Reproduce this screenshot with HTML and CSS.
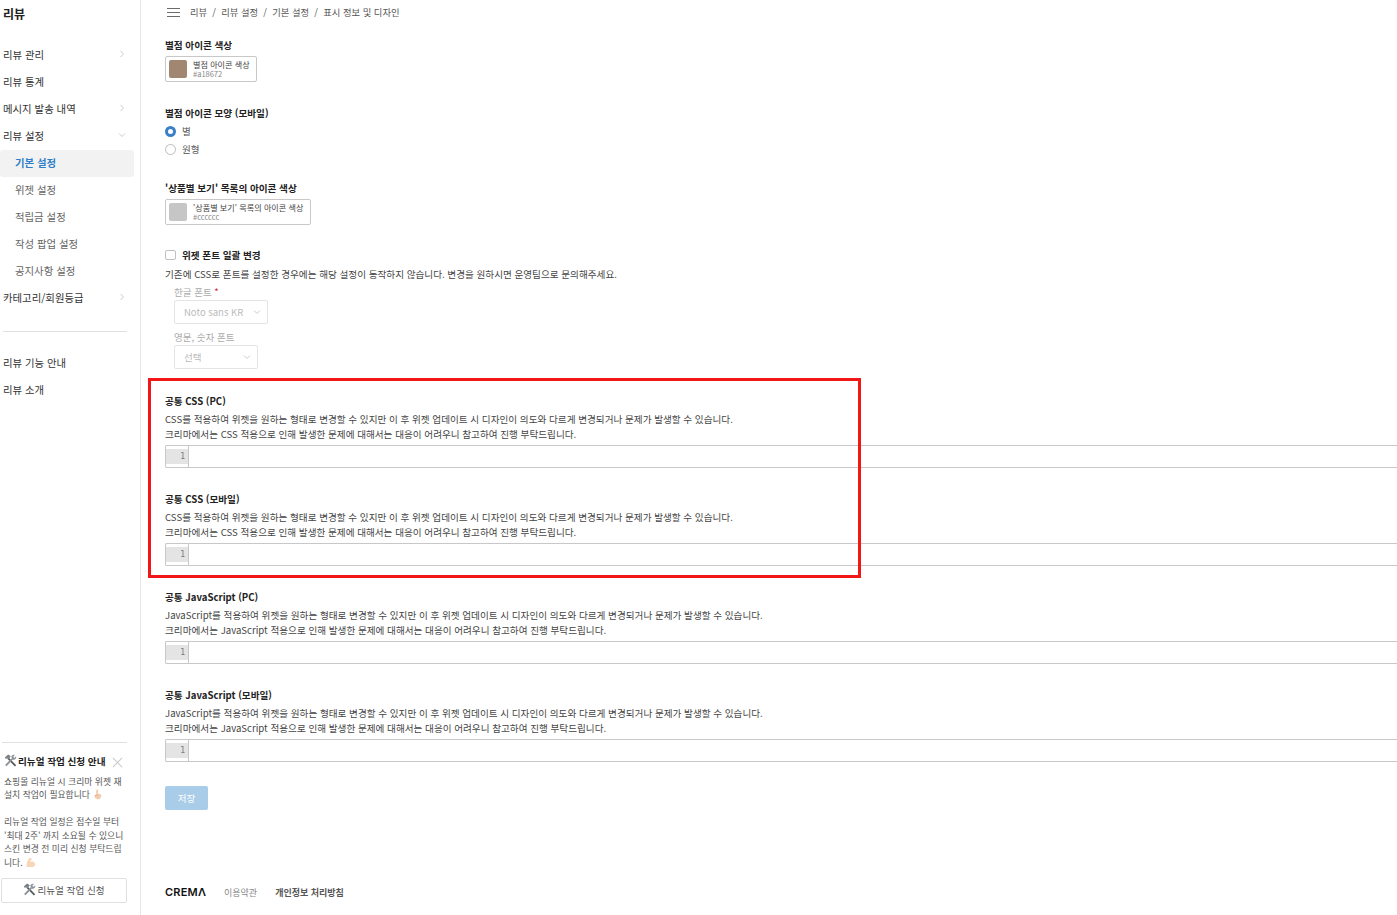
FILE: index.html
```html
<!DOCTYPE html>
<html lang="ko">
<head>
<meta charset="utf-8">
<title>표시 정보 및 디자인</title>
<link rel="stylesheet" href="styles.css">
</head>
<body>
<svg class="defs" width="0" height="0" aria-hidden="true">
  <symbol id="tools" viewBox="0 0 16 16">
    <path d="M5.2 5.4 L14.2 14.6" stroke="#55595d" stroke-width="2.2" fill="none"/>
    <path d="M1 4.4 L4.6 .9 L6 .9 L8.4 3.2 L5.2 6.6 L3.6 5.2 L2.4 6 Z" fill="#7c8287"/>
    <path d="M10.2 6 L2.2 14.4" stroke="#8d9398" stroke-width="2.4" fill="none"/>
    <path d="M9 3.4 C9.4 1.4 11.6 .4 13.4 1.2 L11.4 3.4 L12.8 4.8 L14.9 2.8 C15.5 4.8 14.4 6.8 12.4 7.2 L10.6 7.2 Z" fill="#8d9398"/>
  </symbol>
  <symbol id="chev-r" viewBox="0 0 8 8"><path d="M2.5 1 L5.5 4 L2.5 7" fill="none" stroke="#c4c4c4" stroke-width="0.9"/></symbol>
  <symbol id="chev-d" viewBox="0 0 8 8"><path d="M1 2.5 L4 5.5 L7 2.5" fill="none" stroke="#c4c4c4" stroke-width="0.9"/></symbol>
</svg>

<div class="page">
  <aside class="sidebar">
    <h1 class="brand">리뷰</h1>
    <nav class="nav nav-main">
      <a class="nav-item">리뷰 관리<svg class="chev"><use href="#chev-r"/></svg></a>
      <a class="nav-item">리뷰 통계</a>
      <a class="nav-item">메시지 발송 내역<svg class="chev"><use href="#chev-r"/></svg></a>
      <a class="nav-item">리뷰 설정<svg class="chev"><use href="#chev-d"/></svg></a>
      <a class="nav-sub active">기본 설정</a>
      <a class="nav-sub">위젯 설정</a>
      <a class="nav-sub">적립금 설정</a>
      <a class="nav-sub">작성 팝업 설정</a>
      <a class="nav-sub">공지사항 설정</a>
      <a class="nav-item">카테고리/회원등급<svg class="chev"><use href="#chev-r"/></svg></a>
    </nav>
    <hr class="side-rule first">
    <nav class="nav">
      <a class="nav-item">리뷰 기능 안내</a>
      <a class="nav-item">리뷰 소개</a>
    </nav>
    <div class="notice">
      <hr class="side-rule">
      <div class="notice-head">
        <svg class="tool-ico"><use href="#tools"/></svg>
        <strong>리뉴얼 작업 신청 안내</strong>
        <svg class="close" viewBox="0 0 12 12"><path d="M1 1 L11 11 M11 1 L1 11" stroke="#c9c9c9" stroke-width="1.1"/></svg>
      </div>
      <p class="notice-text">쇼핑몰 리뉴얼 시 크리마 위젯 재설치 작업이 필요합니다
        <svg class="emoji" viewBox="0 0 12 12"><path d="M5 .6 C5.8 .2 6.6 .6 6.6 1.6 L6.6 5 L9 5.4 C10 5.8 10.4 7 10 8.4 C9.5 10.4 8 11.4 6 11.2 C4 11 2.8 9.6 2.6 8 C2.5 7 3.4 6.2 4.6 5.8 L4.6 1.6 Z" fill="#f3cdb0"/><path d="M3.4 7.5 C4.5 6.8 6 7 7 7.6" stroke="#d99a72" stroke-width=".6" fill="none"/></svg></p>
      <p class="notice-text gap">리뉴얼 작업 일정은 접수일 부터 '최대 2주' 까지 소요될 수 있으니 스킨 변경 전 미리 신청 부탁드립니다.
        <svg class="emoji" viewBox="0 0 12 12"><path d="M5 1.2 C6.6 .6 7.6 1.4 7.4 2.6 L6.2 3.2 L6 5.4 C7.6 4.4 10 5 10.8 6.8 C11.4 8.6 10.6 10.6 8.4 11 L2 11 C1.2 9 2.4 4.2 5 1.2 Z" fill="#f7d6b5"/></svg></p>
      <button class="notice-btn" type="button"><svg class="tool-ico"><use href="#tools"/></svg>리뉴얼 작업 신청</button>
    </div>
  </aside>

  <main class="main">
    <header class="crumbs">
      <svg class="burger" viewBox="0 0 13 9"><path d="M0 .5 H13 M0 4.5 H13 M0 8.5 H13" stroke="#6b6b6b" stroke-width="1"/></svg>
      <span class="crumb-text">리뷰&nbsp; /&nbsp; 리뷰 설정&nbsp; /&nbsp; 기본 설정&nbsp; /&nbsp; 표시 정보 및 디자인</span>
    </header>

    <section class="field f-color1">
      <h2 class="label">별점 아이콘 색상</h2>
      <div class="swatch-box">
        <span class="swatch brown"></span>
        <span class="swatch-text"><b>별점 아이콘 색상</b><i>#a18672</i></span>
      </div>
    </section>

    <section class="field f-shape">
      <h2 class="label">별점 아이콘 모양 (모바일)</h2>
      <label class="radio-row"><span class="radio on"></span>별</label>
      <label class="radio-row"><span class="radio"></span>원형</label>
    </section>

    <section class="field f-color2">
      <h2 class="label">'상품별 보기' 목록의 아이콘 색상</h2>
      <div class="swatch-box">
        <span class="swatch grey"></span>
        <span class="swatch-text"><b>'상품별 보기' 목록의 아이콘 색상</b><i>#cccccc</i></span>
      </div>
    </section>

    <section class="field f-font">
      <div class="check-row"><span class="check"></span><h2 class="label">위젯 폰트 일괄 변경</h2></div>
      <p class="desc">기존에 CSS로 폰트를 설정한 경우에는 해당 설정이 동작하지 않습니다. 변경을 원하시면 운영팀으로 문의해주세요.</p>
      <div class="font-opts">
        <div class="opt-label">한글 폰트 <em>*</em></div>
        <div class="select s-wide"><span>Noto sans KR</span><svg class="chev"><use href="#chev-d"/></svg></div>
        <div class="opt-label second">영문, 숫자 폰트</div>
        <div class="select s-narrow"><span>선택</span><svg class="chev"><use href="#chev-d"/></svg></div>
      </div>
    </section>

    <section class="code-field">
      <h2 class="label">공통 CSS (PC)</h2>
      <p class="desc">CSS를 적용하여 위젯을 원하는 형태로 변경할 수 있지만 이 후 위젯 업데이트 시 디자인이 의도와 다르게 변경되거나 문제가 발생할 수 있습니다.</p>
      <p class="desc">크리마에서는 CSS 적용으로 인해 발생한 문제에 대해서는 대응이 어려우니 참고하여 진행 부탁드립니다.</p>
      <div class="editor"><div class="gutter-col"><span class="gutter">1</span></div></div>
    </section>
    <section class="code-field">
      <h2 class="label">공통 CSS (모바일)</h2>
      <p class="desc">CSS를 적용하여 위젯을 원하는 형태로 변경할 수 있지만 이 후 위젯 업데이트 시 디자인이 의도와 다르게 변경되거나 문제가 발생할 수 있습니다.</p>
      <p class="desc">크리마에서는 CSS 적용으로 인해 발생한 문제에 대해서는 대응이 어려우니 참고하여 진행 부탁드립니다.</p>
      <div class="editor"><div class="gutter-col"><span class="gutter">1</span></div></div>
    </section>
    <section class="code-field">
      <h2 class="label">공통 JavaScript (PC)</h2>
      <p class="desc">JavaScript를 적용하여 위젯을 원하는 형태로 변경할 수 있지만 이 후 위젯 업데이트 시 디자인이 의도와 다르게 변경되거나 문제가 발생할 수 있습니다.</p>
      <p class="desc">크리마에서는 JavaScript 적용으로 인해 발생한 문제에 대해서는 대응이 어려우니 참고하여 진행 부탁드립니다.</p>
      <div class="editor"><div class="gutter-col"><span class="gutter">1</span></div></div>
    </section>
    <section class="code-field">
      <h2 class="label">공통 JavaScript (모바일)</h2>
      <p class="desc">JavaScript를 적용하여 위젯을 원하는 형태로 변경할 수 있지만 이 후 위젯 업데이트 시 디자인이 의도와 다르게 변경되거나 문제가 발생할 수 있습니다.</p>
      <p class="desc">크리마에서는 JavaScript 적용으로 인해 발생한 문제에 대해서는 대응이 어려우니 참고하여 진행 부탁드립니다.</p>
      <div class="editor"><div class="gutter-col"><span class="gutter">1</span></div></div>
    </section>

    <button class="save" type="button">저장</button>

    <footer class="footer">
      <span class="logo">CREM<span class="logo-a">Λ</span></span>
      <a class="foot-link">이용약관</a>
      <a class="foot-link strong">개인정보 처리방침</a>
    </footer>
  </main>
</div>
<div class="highlight"></div>
</body>
</html>
```
FILE: styles.css
```css
* { box-sizing: border-box; }
html, body { margin: 0; padding: 0; height: 915px; overflow: hidden; background: #fff; }
body {
  font-family: "Noto Sans CJK KR", "Noto Sans", sans-serif;
  font-size: 9.6px;
  color: #333;
  position: relative;
}
.defs { position: absolute; }
.page { display: flex; height: 915px; }

/* sidebar */
.sidebar {
  width: 141px;
  flex: none;
  border-right: 1px solid #e8e8e8;
  display: flex;
  flex-direction: column;
  height: 915px;
}
.brand { margin: 0; padding: 5px 0 0 3px; height: 41.5px; font-size: 12px; line-height: 18px; font-weight: 700; color: #222; }
.nav { display: flex; flex-direction: column; }
.nav-item, .nav-sub {
  height: 27px;
  display: flex;
  align-items: center;
  justify-content: space-between;
  font-size: 10.4px;
  color: #333;
  padding: 0 14px 0 3px;
}
.nav-main .nav-item, .nav-main .nav-sub { padding-bottom: 1.5px; }
.nav-sub { padding-left: 15px; margin-right: 6px; color: #666; }
.nav-sub.active { background: #f2f2f3; color: #2f7fc8; font-weight: 700; border-radius: 3px; }
.chev { width: 8px; height: 8px; flex: none; }
.side-rule { border: 0; border-top: 1px solid #e0e0e0; margin: 0 13px 0 3px; }
.side-rule.first { margin-top: 19.5px; margin-bottom: 17px; }
.notice { margin-top: auto; padding: 0 0 12px 0; }
.notice > .side-rule { margin: 0 13px 0 2px; }
.notice-head { display: flex; align-items: center; height: 22px; margin-top: 7px; padding-left: 4px; font-size: 9.6px; color: #222; }
.notice-head strong { font-weight: 700; white-space: nowrap; margin-left: 1px; }
.tool-ico { width: 13px; height: 13px; flex: none; }
.close { width: 11px; height: 11px; margin-left: 6px; margin-top: 3px; flex: none; }
.notice-text { margin: 3px 12px 0 4px; font-size: 8.8px; line-height: 13.5px; color: #555; }
.notice-text.gap { margin-top: 13.5px; }
.emoji { width: 11px; height: 11px; vertical-align: -2px; }
.notice-btn {
  display: flex; align-items: center; justify-content: center; gap: 1px;
  width: 126px; height: 25px; margin: 9px 0 0 1px;
  background: #fff; border: 1px solid #e0e0e0; border-radius: 2px;
  font: inherit; font-size: 9.6px; color: #555; padding: 0 0 2px;
}

/* main */
.main { flex: 1; min-width: 0; padding-left: 24px; }
.crumbs { display: flex; align-items: center; height: 24px; }
.burger { width: 13px; height: 9px; margin: 0 10px 0 2px; flex: none; }
.crumb-text { font-size: 9.32px; color: #555; white-space: nowrap; }
.label { margin: 0; font-size: 9.6px; line-height: 14px; font-weight: 700; color: #222; }
.desc { margin: 0; font-size: 9.6px; line-height: 15px; color: #444; white-space: nowrap; }
.field { display: block; }
.f-color1 { margin-top: 14px; }
.swatch-box {
  display: inline-flex; align-items: center; height: 26px; margin-top: 4px; padding: 0 6.5px 0 3px;
  border: 1px solid #c8c8c8; border-radius: 2px; vertical-align: top;
}
.swatch { width: 18px; height: 18px; border-radius: 2px; margin-right: 6px; flex: none; }
.swatch.brown { background: #a18672; }
.swatch.grey { background: #c6c6c6; }
.swatch-text { display: flex; flex-direction: column; }
.swatch-text b { font-weight: 400; font-size: 8.1px; line-height: 10px; color: #444; white-space: nowrap; }
.swatch-text i { font-style: normal; font-size: 7.5px; line-height: 8px; color: #888; }
.f-shape { margin-top: 24px; }
.radio-row { display: flex; align-items: center; height: 18px; font-size: 9.5px; color: #555; }
.f-shape .label { margin-bottom: 2px; }
.radio { width: 11px; height: 11px; border-radius: 50%; border: 1px solid #bbb; margin-right: 6px; background: #fff; flex: none; }
.radio.on { border: 3px solid #3a80c9; }
.f-color2 { margin-top: 23px; }
.f-font { margin-top: 23px; }
.check-row { display: flex; align-items: center; height: 14px; }
.check { width: 11px; height: 10px; border: 1px solid #c0c0c0; border-radius: 2px; margin-right: 6px; flex: none; }
.f-font .desc { margin-top: 5px; }
.font-opts { padding-left: 9px; }
.opt-label { font-size: 9.5px; line-height: 13px; margin-top: 3px; color: #aaa; position: relative; top: 1px; }
.opt-label em { font-style: normal; color: #d9232e; }
.opt-label.second { margin-top: 6px; }
.select {
  display: flex; align-items: center; justify-content: space-between; height: 24px; margin-top: 2px; padding: 0 6px 1px 9px;
  border: 1px solid #e4e4e4; border-radius: 2px; font-size: 9.5px; color: #bbb;
}
.s-wide { width: 94px; }
.s-narrow { width: 84px; }
.code-field { margin-top: 24px; }
.f-font + .code-field { margin-top: 25px; }
.code-field .label { margin-bottom: 4px; }
.editor {
  height: 23px; margin-top: 3px; border: 1px solid #c8c8c8; border-right: 0; border-radius: 2px 0 0 2px;
  display: flex;
}
.gutter-col { width: 23px; border-right: 1px solid #c8c8c8; padding-top: 3px; flex: none; }
.gutter {
  display: block; height: 15px; background: #e4e4e4; padding: 0 3px 0 0;
  text-align: right; font-family: "DejaVu Sans Mono", monospace; font-size: 8px; line-height: 15px; color: #777;
}
.save {
  display: block; width: 43px; height: 24px; margin-top: 24px; padding: 0; border: 0; border-radius: 2px;
  background: #a9cde9; color: #fff; font: inherit; font-size: 9.6px;
}
.footer { display: flex; align-items: center; margin-top: 72px; height: 20px; }
.logo { font-family: "Inter", sans-serif; font-weight: 600; font-size: 11px; letter-spacing: .2px; color: #111; width: 59px; }
.foot-link { font-size: 9px; color: #888; margin-right: 18px; white-space: nowrap; }
.foot-link.strong { color: #555; font-weight: 700; }

/* annotation drawn over the page */
.highlight { position: absolute; left: 148px; top: 378px; width: 713px; height: 200px; border: 3px solid #f21616; pointer-events: none; }
```
